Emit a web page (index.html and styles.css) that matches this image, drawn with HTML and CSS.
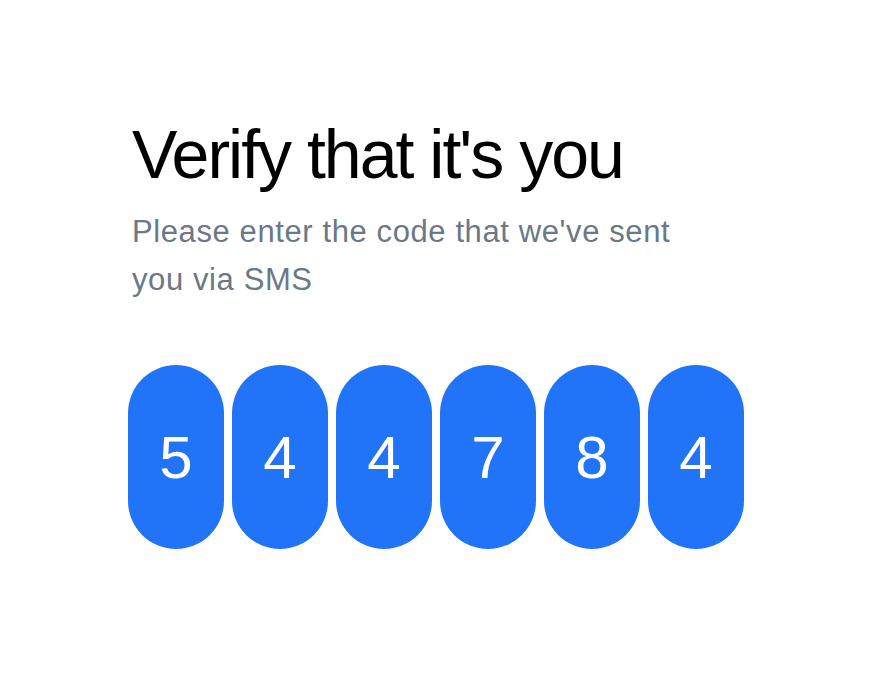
FILE: index.html
```html
<!DOCTYPE html>
<html lang="en">
<head>
<meta charset="utf-8">
<title>Verify that it's you</title>
<link rel="stylesheet" href="styles.css">
</head>
<body>
<main class="verify">
  <div class="intro">
    <h1 class="title">Verify that it's you</h1>
    <p class="subtitle">Please enter the code that we've sent you via SMS</p>
  </div>
  <div class="code">
    <div class="digit">5</div>
    <div class="digit">4</div>
    <div class="digit">4</div>
    <div class="digit">7</div>
    <div class="digit">8</div>
    <div class="digit">4</div>
  </div>
</main>
</body>
</html>
```
FILE: styles.css
```css
html, body {
  margin: 0;
  padding: 0;
  background: #ffffff;
}
body {
  font-family: "Liberation Sans", Arial, sans-serif;
  width: 872px;
  height: 677px;
  overflow: hidden;
}
.verify {
  display: flex;
  flex-direction: column;
  padding: 114px 0 0 128px;
}
.intro {
  padding-left: 4px;
  width: 600px;
}
.title {
  margin: 0;
  font-size: 68px;
  line-height: 80px;
  font-weight: 400;
  letter-spacing: -2px;
  color: #000000;
}
.subtitle {
  margin: 14px 0 0;
  font-size: 31px;
  line-height: 48px;
  color: #6b7886;
  letter-spacing: 0.6px;
  width: 560px;
}
.code {
  display: flex;
  gap: 8px;
  margin-top: 61px;
}
.digit {
  width: 96px;
  height: 184px;
  border-radius: 48px;
  background: #2173f7;
  color: #ffffff;
  font-size: 60px;
  display: flex;
  align-items: center;
  justify-content: center;
}
```
